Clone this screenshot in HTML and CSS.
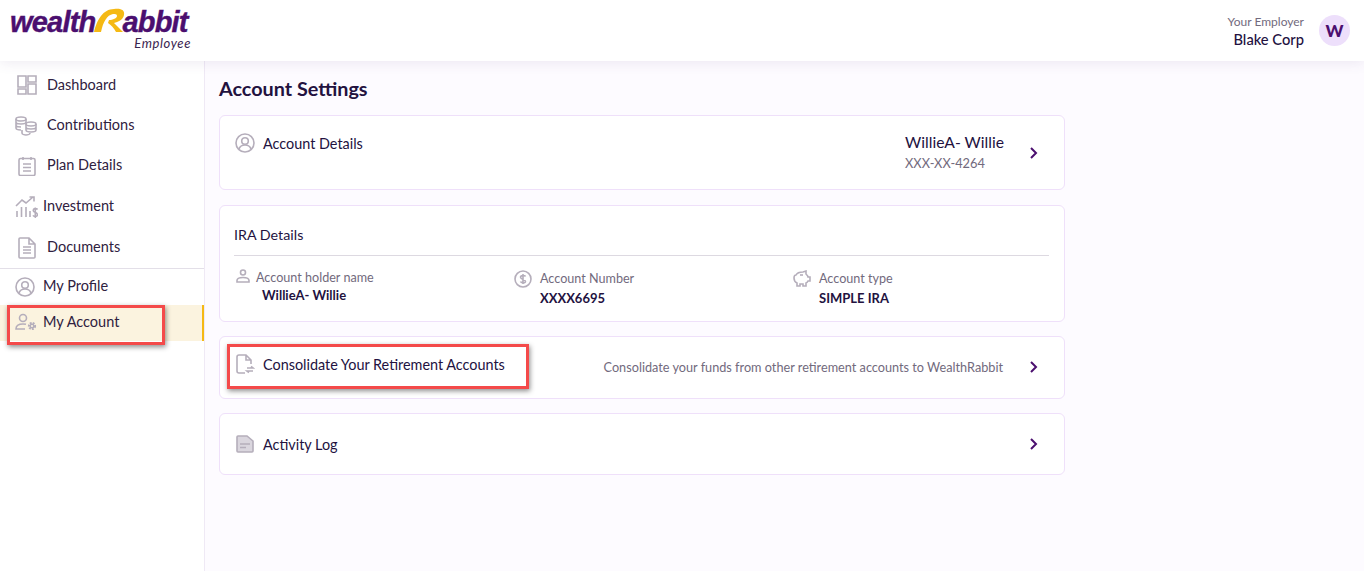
FILE: index.html
```html
<!DOCTYPE html>
<html lang="en">
<head>
  <meta charset="UTF-8">
  <title>Account Settings</title>
  <link rel="stylesheet" href="styles.css">
</head>
<body>
  <header class="topbar">
    <div class="logo">
      <div class="logo-word">
        <span>wealth</span>
        <svg class="logo-r" width="32" height="26" viewBox="0 0 32 26">
          <path d="M0 24C3 12 9 1 20 1c7-1 11 1 10 6-1 5-6 7-10 8 3 3 6 6 9 9h-7c-2-4-5-7-8-9l1-3c4 0 8-2 8-4s-2-2-4-2C13 7 9 14 7 24z" fill="#f5b914"/>
        </svg>
        <span>abbit</span>
      </div>
      <div class="logo-sub">Employee</div>
    </div>
    <div class="employer">
      <div class="employer-text">
        <div class="employer-label">Your Employer</div>
        <div class="employer-name">Blake Corp</div>
      </div>
      <div class="avatar">W</div>
    </div>
  </header>

  <div class="layout">
    <nav class="sidebar">
      <a class="nav-item">
        <svg class="nav-icon" width="20" height="20" viewBox="0 0 20 20"><path d="M1 1h8v11H1zM11 1h8v6h-8zM11 9h8v10h-8zM1 14h8v5H1z"/></svg>
        Dashboard
      </a>
      <a class="nav-item">
        <svg class="nav-icon" width="22" height="20" viewBox="0 0 22 20"><ellipse cx="6" cy="3" rx="5" ry="2"/><path d="M1 3v9c0 1 2 2 5 2M11 3v4M1 6c0 1 2 2 5 2s5-1 5-2M1 9c0 1 2 2 5 2"/><ellipse cx="16" cy="8" rx="5" ry="2"/><path d="M11 8v6c0 1 2 2 5 2s5-1 5-2V8M11 11c0 1 2 2 5 2s5-1 5-2"/><path d="M7 14v3c0 1 2 2 4 2s4-1 4-2"/></svg>
        Contributions
      </a>
      <a class="nav-item">
        <svg class="nav-icon" width="20" height="20" viewBox="0 0 20 20"><rect x="2" y="2.500" width="16" height="17" rx="1.500"/><path d="M6 1v3M14 1v3M6 8h8M6 11.500h8M6 15h8"/></svg>
        Plan Details
      </a>
      <a class="nav-item nav-item-tight">
        <svg class="nav-icon" width="23" height="22" viewBox="0 0 23 22"><path d="M1 10l6-6 4 3 7-6M14.500 1H19v4.500M2 21v-6M6.500 21v-10M11 21v-10M15 21v-6"/><path d="M22.500 13.500c-.8-1.300-4.300-1.300-4.300 1s4.300 1.900 4.300 4.200-3.800 2-4.500.7M20.300 11.500V22"/></svg>
        Investment
      </a>
      <a class="nav-item">
        <svg class="nav-icon" width="20" height="22" viewBox="0 0 20 22"><path d="M3 1h9l6 6v13a1 1 0 0 1-1 1H3a1 1 0 0 1-1-1V2a1 1 0 0 1 1-1zM12 1v6h6M6 10h8M6 13h8M6 16h8"/></svg>
        Documents
      </a>
      <a class="nav-item nav-item-tight nav-profile">
        <svg class="nav-icon" width="20" height="20" viewBox="0 0 20 20"><circle cx="10" cy="10" r="9"/><circle cx="10" cy="8" r="3.300"/><path d="M4 16c1-3 3-4 6-4s5 1 6 4"/></svg>
        My Profile
      </a>
      <a class="nav-item nav-item-tight nav-active">
        <svg class="nav-icon" width="22" height="18" viewBox="0 0 22 18"><circle cx="8" cy="5" r="3.500"/><path d="M10 16H1c0-4 3-5 7-5 1 0 2 0 3 .3"/><circle cx="17" cy="13" r="3" stroke-width="2.200" stroke-dasharray="1.800 1.100"/><circle cx="17" cy="13" r="1.800" stroke-width="1.400"/></svg>
        My Account
      </a>
      <div class="mark mark-nav"></div>
    </nav>

    <main class="content">
      <h1>Account Settings</h1>

      <section class="card card-account">
        <div class="row-title">
          <svg class="card-icon" width="20" height="20" viewBox="0 0 20 20"><circle cx="10" cy="10" r="9"/><circle cx="10" cy="8" r="3.300"/><path d="M4 16c1-3 3-4 6-4s5 1 6 4"/></svg>
          Account Details
        </div>
        <div class="account-who">
          <div class="who-name">WillieA- Willie</div>
          <div class="who-ssn">XXX-XX-4264</div>
        </div>
        <svg class="chevron" width="10" height="12" viewBox="0 0 10 12"><path d="M2 1l5 5-5 5"/></svg>
      </section>

      <section class="card card-ira">
        <div class="ira-title">IRA Details</div>
        <div class="ira-cols">
          <div class="ira-col ira-col-first">
            <svg class="card-icon" width="14" height="14" viewBox="0 0 14 14"><circle cx="7" cy="3.500" r="2.500"/><path d="M1 13v-1.500C1 9.500 3 8.500 7 8.500s6 1 6 3V13z"/></svg>
            <div>
              <div class="ira-label">Account holder name</div>
              <div class="ira-value ira-value-indent">WillieA- Willie</div>
            </div>
          </div>
          <div class="ira-col">
            <svg class="card-icon" width="18" height="18" viewBox="0 0 18 18"><circle cx="9" cy="9" r="8"/><path d="M11.500 6.500C11 5.300 6.500 5 6.500 7.300S11.500 9.300 11.500 11.500 7 13 6.500 11.500M9 4v10"/></svg>
            <div>
              <div class="ira-label">Account Number</div>
              <div class="ira-value">XXXX6695</div>
            </div>
          </div>
          <div class="ira-col">
            <svg class="card-icon" width="18" height="17" viewBox="0 0 18 17"><path d="M3 5c1-2 4-3 7-3l3-1v3c1 1 2 2 2 3h2v4h-2c-.5 1-1 1.500-2 2v3h-3v-2H7v2H4v-3C2 12 1 10 1 8s1-3 2-3z"/><path d="M7 5h3"/></svg>
            <div>
              <div class="ira-label">Account type</div>
              <div class="ira-value">SIMPLE IRA</div>
            </div>
          </div>
        </div>
      </section>

      <section class="card card-consolidate">
        <div class="row-title">
          <svg class="card-icon" width="20" height="20" viewBox="0 0 20 20"><path d="M10 19H4a2 2 0 0 1-2-2V3a2 2 0 0 1 2-2h7l5 5v4M11 1v5h5M12 14h6l-2-1.500M18 17h-6l2 1.500"/></svg>
          Consolidate Your Retirement Accounts
        </div>
        <div class="consolidate-note">Consolidate your funds from other retirement accounts to WealthRabbit</div>
        <svg class="chevron" width="10" height="12" viewBox="0 0 10 12"><path d="M2 1l5 5-5 5"/></svg>
        <div class="mark mark-consolidate"></div>
      </section>

      <section class="card card-log">
        <div class="row-title">
          <svg class="card-icon" width="20" height="18" viewBox="0 0 20 18"><path d="M3 1h9l6 5v10a1 1 0 0 1-1 1H3a1 1 0 0 1-1-1V2a1 1 0 0 1 1-1z" fill="#dad6de"/><path d="M5 9h10M5 12.500h6"/></svg>
          Activity Log
        </div>
        <svg class="chevron" width="10" height="12" viewBox="0 0 10 12"><path d="M2 1l5 5-5 5"/></svg>
      </section>
    </main>
  </div>
</body>
</html>
```

FILE: styles.css
```css
* {
  box-sizing: border-box;
  margin: 0;
}
html, body {
  height: 100%;
}
body {
  background: #fdfbff;
  color: #23123f;
  font-family: "Lato", "Noto Sans", sans-serif;
  overflow: hidden;
}

/* top bar */
.topbar {
  position: relative;
  z-index: 2;
  display: flex;
  align-items: center;
  justify-content: space-between;
  height: 61px;
  padding: 0 14px 0 10px;
  background: #fff;
  box-shadow: 0 2px 12px rgba(90, 60, 130, 0.1);
}
.logo {
  align-self: flex-start;
  width: 181px;
  padding-top: 8px;
}
.logo-word {
  display: flex;
  align-items: flex-end;
  height: 29px;
  color: #4b0f6f;
  font-family: "Liberation Sans", sans-serif;
  font-size: 29px;
  font-style: italic;
  font-weight: 700;
  line-height: 29px;
  letter-spacing: -0.8px;
  -webkit-text-stroke: 0.4px #4b0f6f;
}
.logo-r {
  flex: none;
  margin: 0 -4px 3px -1px;
}
.logo-sub {
  color: #3a2450;
  font-size: 13px;
  font-style: italic;
  line-height: 13px;
  text-align: right;
  letter-spacing: 0.6px;
}
.employer {
  display: flex;
  align-items: center;
  gap: 15px;
}
.employer-text {
  padding-top: 1px;
  text-align: right;
}
.employer-label {
  color: #726a7d;
  font-size: 12px;
  line-height: 16px;
}
.employer-name {
  font-size: 14.7px;
  font-weight: 500;
  line-height: 19px;
}
.avatar {
  display: flex;
  align-items: center;
  justify-content: center;
  width: 31px;
  height: 31px;
  border-radius: 50%;
  background: #eddffb;
  color: #4b0f6f;
  font-size: 17px;
  font-weight: 900;
}

/* sidebar */
.layout {
  display: flex;
  height: 510px;
}
.sidebar {
  position: relative;
  flex: none;
  width: 205px;
  padding-top: 4px;
  background: #fff;
  border-right: 1px solid #efe9f5;
}
.nav-item {
  display: flex;
  align-items: center;
  gap: 10px;
  height: 40px;
  padding: 0 0 2px 17px;
  font-size: 14.5px;
  color: #2f2140;
}
.nav-item-tight {
  gap: 8px;
  padding-left: 15px;
}
.nav-icon, .card-icon {
  flex: none;
  fill: none;
  stroke: #b5aebb;
  stroke-width: 1.600;
}
.nav-icon {
  margin-top: 2px;
}
.nav-item:nth-child(2) {
  padding-left: 15px;
  padding-bottom: 1px;
}
.nav-item:nth-child(3) {
  padding-bottom: 1px;
}
.nav-item:nth-child(4) {
  height: 41px;
  gap: 5px;
  padding-bottom: 0;
}
.nav-item:nth-child(5) {
  height: 41px;
  padding-bottom: 0;
}
.nav-profile {
  height: 37px;
  margin-top: 1px;
  padding-bottom: 3px;
  border-top: 1px solid #e3dfe8;
}
.nav-active {
  height: 36px;
  gap: 6px;
  background: #fbf3df;
  border-right: 2px solid #f5b914;
  padding-bottom: 4px;
}

/* red marks drawn over the screenshot */
.mark {
  position: absolute;
  border: 3px solid #f44a4a;
  box-shadow: 1px 2px 5px rgba(0, 0, 0, 0.45);
  pointer-events: none;
}
.mark-nav {
  top: 244px;
  left: 7px;
  width: 158px;
  height: 40px;
}
.mark-consolidate {
  top: 7px;
  left: 7px;
  width: 302px;
  height: 45px;
}

/* main column */
.content {
  flex: none;
  width: 860px;
  padding: 14px 0 0 14px;
}
h1 {
  height: 40px;
  font-size: 19.8px;
  font-weight: 700;
  line-height: 27px;
}
.card {
  position: relative;
  display: flex;
  align-items: flex-start;
  width: 846px;
  margin-bottom: 15px;
  background: #fff;
  border: 1px solid #efe0fa;
  border-radius: 6px;
}
.row-title {
  display: flex;
  align-items: center;
  gap: 8px;
  font-size: 14.4px;
}
.chevron {
  position: absolute;
  right: 25px;
  fill: none;
  stroke: #4b0f6f;
  stroke-width: 2;
}

.card-account {
  height: 75px;
  padding: 18px 60px 0 15px;
  justify-content: space-between;
}
.card-account .row-title {
  margin-top: -1px;
}
.card-account .chevron {
  top: 31px;
}
.who-name {
  margin-top: -2px;
  font-size: 15.7px;
  line-height: 20px;
}
.who-ssn {
  margin-top: 3px;
  color: #726a7d;
  font-size: 12.8px;
  line-height: 16px;
}

.card-ira {
  display: block;
  height: 117px;
  margin-bottom: 14px;
  padding: 0 15px 0 14px;
}
.ira-title {
  height: 50px;
  padding-top: 20px;
  border-bottom: 1px solid #ddd9e1;
  font-size: 14.3px;
  line-height: 17px;
}
.ira-cols {
  display: flex;
  padding-top: 12px;
}
.ira-col {
  display: flex;
  flex: none;
  align-items: flex-start;
  gap: 8px;
  width: 279px;
  padding-top: 2px;
}
.ira-col-first {
  width: 280px;
  padding: 1px 0 0 2px;
  gap: 6px;
}
.ira-label {
  color: #726a7d;
  font-size: 12.6px;
  line-height: 17px;
}
.ira-value {
  margin-top: 3px;
  font-size: 13px;
  font-weight: 700;
  line-height: 17px;
}
.ira-col-first .ira-value {
  margin-top: 1px;
}
.ira-value-indent {
  padding-left: 6px;
}

.card-consolidate {
  height: 63px;
  margin-bottom: 14px;
  padding: 17px 0 0 15px;
}
.consolidate-note {
  position: absolute;
  top: 22px;
  right: 61px;
  color: #726a7d;
  font-size: 12.7px;
  line-height: 16px;
}
.card-consolidate .chevron {
  top: 24px;
}

.card-log {
  height: 62px;
  padding: 21px 0 0 15px;
}
.card-log .chevron {
  top: 24px;
}
```
